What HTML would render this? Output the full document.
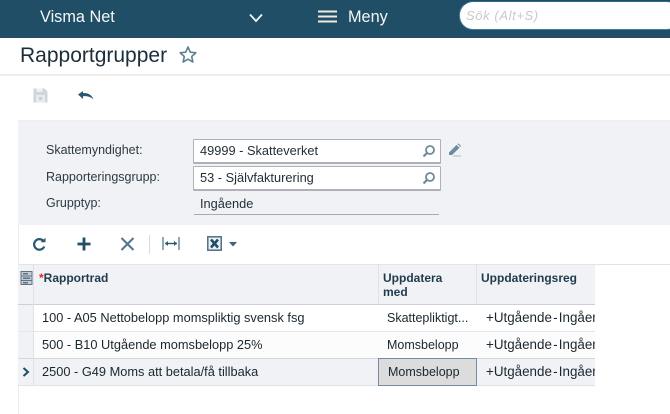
<!DOCTYPE html>
<html lang="sv">
<head>
<meta charset="utf-8">
<title>Rapportgrupper</title>
<style>
html,body{margin:0;padding:0;background:#fff}
body{position:relative;width:670px;height:414px;overflow:hidden;font-family:"Liberation Sans",sans-serif;color:#1f2d36}
div,span,svg{position:absolute}
.t{white-space:nowrap;line-height:16px}
.lbl{font-size:12.5px;color:#2c3a44;left:46px}
.val{font-size:12.8px;color:#1f2d36;left:200px}
.cell{font-size:12.8px;color:#1a2730}
.c2{font-size:12.5px;color:#1a2730}
.c3{font-size:13.4px;color:#1a2730;word-spacing:-2.500px}
.hd{font-size:12px;font-weight:bold;color:#1f3a4d;line-height:14px}
.inp{left:193px;width:246px;height:22px;background:#fff;border:1px solid #aeb1ba;border-bottom-width:2px;border-radius:1px}
</style>
</head>
<body>
<div style="left:0;top:0;width:670px;height:38px;background:#1f4e66"></div>
<div class="t" style="left:40px;top:9px;font-size:16.300px;color:#f4f7f8">Visma Net</div>
<svg style="left:248px;top:12px" width="16" height="12" viewBox="0 0 16 12"><path d="M2 2.500L8 9L14 2.500" fill="none" stroke="#f2f5f6" stroke-width="1.800"/></svg>
<svg style="left:318px;top:9px" width="20" height="16" viewBox="0 0 20 16"><path d="M0 2.500H19M0 7.500H19M0 12.500H19" stroke="#efe9e0" stroke-width="2"/></svg>
<div class="t" style="left:348px;top:9px;font-size:16.300px;color:#f4f7f8">Meny</div>
<div style="left:459px;top:1px;width:220px;height:27px;background:#fff;border-radius:14px;border:1px solid #3f7f9f;border-top-color:#2a6a8a"></div>
<div class="t" style="left:466px;top:8px;font-size:13px;font-style:italic;color:#c9c9c9;letter-spacing:.6px">Sök (Alt+S)</div>

<div class="t" style="left:20px;top:43px;font-size:21px;line-height:25px;color:#1c2e3b">Rapportgrupper</div>
<svg style="left:178px;top:45px" width="20" height="19" viewBox="0 0 20 19"><path d="M10 2L12.300 7.200L17.900 7.800L13.700 11.500L14.900 17L10 14.200L5.100 17L6.300 11.500L2.100 7.800L7.700 7.200Z" fill="none" stroke="#5f7f92" stroke-width="1.600" stroke-linejoin="round"/></svg>
<div style="left:0;top:74px;width:670px;height:2px;background:#eeeeee"></div>

<svg style="left:33px;top:88px" width="15" height="15" viewBox="0 0 15 15"><path d="M0.500 0.500H11.500L14.500 3.500V14.500H0.500Z" fill="#ccd6dc"/><rect x="3.500" y="0.500" width="6" height="3.500" fill="#eef1f3"/><rect x="3" y="7" width="9" height="7.500" fill="#e6ebee"/><rect x="6" y="9" width="3" height="3" fill="#c3cfd6"/></svg>
<svg style="left:78px;top:91px" width="16" height="9" viewBox="0 0 16 9"><path d="M0 3.500L5 0V2C9.500 1.600 13.800 3.500 15.500 8.500C13 6 9.500 4.800 5 5.200V8Z" fill="#2a5870"/></svg>

<div style="left:18px;top:122px;width:652px;height:103px;background:#f1f2f5"></div>
<div style="left:18px;top:120px;width:652px;height:2px;background:#eeeff1"></div>
<div style="left:18px;top:225px;width:1px;height:189px;background:#eceded"></div>

<div class="t lbl" style="top:142px">Skattemyndighet:</div>
<div class="t lbl" style="top:169px">Rapporteringsgrupp:</div>
<div class="t lbl" style="top:195px">Grupptyp:</div>

<div class="inp" style="top:139px"></div>
<div class="inp" style="top:166px"></div>
<div class="t val" style="top:143px">49999 - Skatteverket</div>
<div class="t val" style="top:170px">53 - Självfakturering</div>
<div class="t val" style="top:196px">Ingående</div>
<div style="left:194px;top:214px;width:245px;height:1px;background:#a8abb3"></div>

<svg style="left:422px;top:144px" width="14" height="14" viewBox="0 0 14 14"><circle cx="8" cy="6" r="4" fill="none" stroke="#6c8b9d" stroke-width="1.800"/><path d="M5 9L1.500 12.500" stroke="#6c8b9d" stroke-width="2.200"/></svg>
<svg style="left:422px;top:171px" width="14" height="14" viewBox="0 0 14 14"><circle cx="8" cy="6" r="4" fill="none" stroke="#6c8b9d" stroke-width="1.800"/><path d="M5 9L1.500 12.500" stroke="#6c8b9d" stroke-width="2.200"/></svg>
<svg style="left:448px;top:143px" width="14" height="14" viewBox="0 0 14 14"><path d="M1 9.500L8.500 2L11.500 4.800L4 12H1Z" fill="#6c8b9d"/><path d="M9.500 1L10.500 0.500L13 3L12.500 4Z" fill="#6c8b9d"/><path d="M5 13H13" stroke="#a9bac4" stroke-width="1"/></svg>

<svg style="left:32px;top:237px" width="15" height="15" viewBox="0 0 15 15"><path d="M12.300 9.500A5.300 5.300 0 1 1 11.300 3.800" fill="none" stroke="#2a5870" stroke-width="2.200"/><path d="M8.500 5.300H13.500V0.800Z" fill="#2a5870"/></svg>
<svg style="left:77px;top:237px" width="14" height="14" viewBox="0 0 14 14"><path d="M7 0.500V13.500M0.500 7H13.500" stroke="#1f4e66" stroke-width="2.800"/></svg>
<svg style="left:120px;top:237px" width="15" height="14" viewBox="0 0 15 14"><path d="M1.500 1L13.500 13M13.500 1L1.500 13" stroke="#53778c" stroke-width="2.100"/></svg>
<div style="left:149px;top:235px;width:1px;height:19px;background:#d9dcdf"></div>
<svg style="left:162px;top:236px" width="18" height="15" viewBox="0 0 18 15"><path d="M1 1V14M17 1V14" stroke="#4a7086" stroke-width="1.200"/><path d="M3 7.500H15" stroke="#2a5870" stroke-width="1.400"/><path d="M3 7.500L6 5V10ZM15 7.500L12 5V10Z" fill="#2a5870"/></svg>
<svg style="left:207px;top:236px" width="15" height="15" viewBox="0 0 15 15"><rect x="0.800" y="0.800" width="13.400" height="13.400" fill="#eef1f3" stroke="#4a7086" stroke-width="1.500"/><path d="M4 3.500L11 11.500M11 3.500L4 11.500" stroke="#1f4e66" stroke-width="2.600"/></svg>
<svg style="left:229px;top:242px" width="8" height="5" viewBox="0 0 8 5"><path d="M0 0H8L4 4.500Z" fill="#3c657c"/></svg>

<div style="left:18px;top:264px;width:652px;height:1px;background:#e1e3e7"></div>
<div style="left:18px;top:265px;width:577px;height:39px;background:#f1f2f5"></div>
<div style="left:18px;top:304px;width:577px;height:1px;background:#ccd0da"></div>
<div style="left:18px;top:305px;width:15px;height:80px;background:#f1f2f5"></div>
<div style="left:34px;top:332px;width:561px;height:26px;background:#fcfcfc"></div>
<div style="left:34px;top:359px;width:561px;height:26px;background:#f1f2f5"></div>
<div style="left:18px;top:331px;width:577px;height:1px;background:#e6e7ea"></div>
<div style="left:18px;top:358px;width:577px;height:1px;background:#d5d7de"></div>
<div style="left:18px;top:385px;width:577px;height:1px;background:#e1e3e8"></div>
<div style="left:33px;top:265px;width:1px;height:120px;background:#dfe1e6"></div>
<div style="left:378px;top:265px;width:1px;height:39px;background:#dfe1e6"></div>
<div style="left:476px;top:265px;width:1px;height:39px;background:#dfe1e6"></div>

<svg style="left:20px;top:271px" width="13" height="14" viewBox="0 0 13 14"><rect x="1" y="0.500" width="11" height="13" fill="#c5ced4" stroke="#5f7383"/><path d="M1 5H12M1 9.500H12" stroke="#5f7383"/><rect x="3" y="2" width="5" height="1.500" fill="#5f7383"/><rect x="3" y="6.500" width="7" height="1.500" fill="#5f7383"/><rect x="3" y="11" width="5" height="1.500" fill="#5f7383"/></svg>

<div class="t hd" style="left:39px;top:271px"><span style="position:static;color:#e0242c">*</span>Rapportrad</div>
<div class="t hd" style="left:383px;top:271px">Uppdatera<br>med</div>
<div class="t hd" style="left:481px;top:271px">Uppdateringsreg</div>

<div style="left:378px;top:358px;width:97px;height:26px;background:#dcdcdc;border:1px solid #6f8ea0"></div>

<div class="t cell" style="left:42px;top:310px">100 - A05 Nettobelopp momspliktig svensk fsg</div>
<div class="t cell" style="left:42px;top:337px">500 - B10 Utgående momsbelopp 25%</div>
<div class="t cell" style="left:42px;top:364px">2500 - G49 Moms att betala/få tillbaka</div>
<svg style="left:22px;top:367px" width="8" height="10" viewBox="0 0 8 10"><path d="M1.500 1L6 5L1.500 9" fill="none" stroke="#1f4e66" stroke-width="2"/></svg>

<div class="t c2" style="left:387px;top:310px">Skattepliktigt...</div>
<div class="t c2" style="left:387px;top:337px">Momsbelopp</div>
<div class="t c2" style="left:388px;top:364px">Momsbelopp</div>

<div style="left:477px;top:305px;width:118px;height:80px;overflow:hidden">
<div class="t c3" style="left:9px;top:5px">+Utgående - Ingående</div>
<div class="t c3" style="left:9px;top:32px">+Utgående - Ingående</div>
<div class="t c3" style="left:9px;top:59px">+Utgående - Ingående</div>
</div>
</body>
</html>
